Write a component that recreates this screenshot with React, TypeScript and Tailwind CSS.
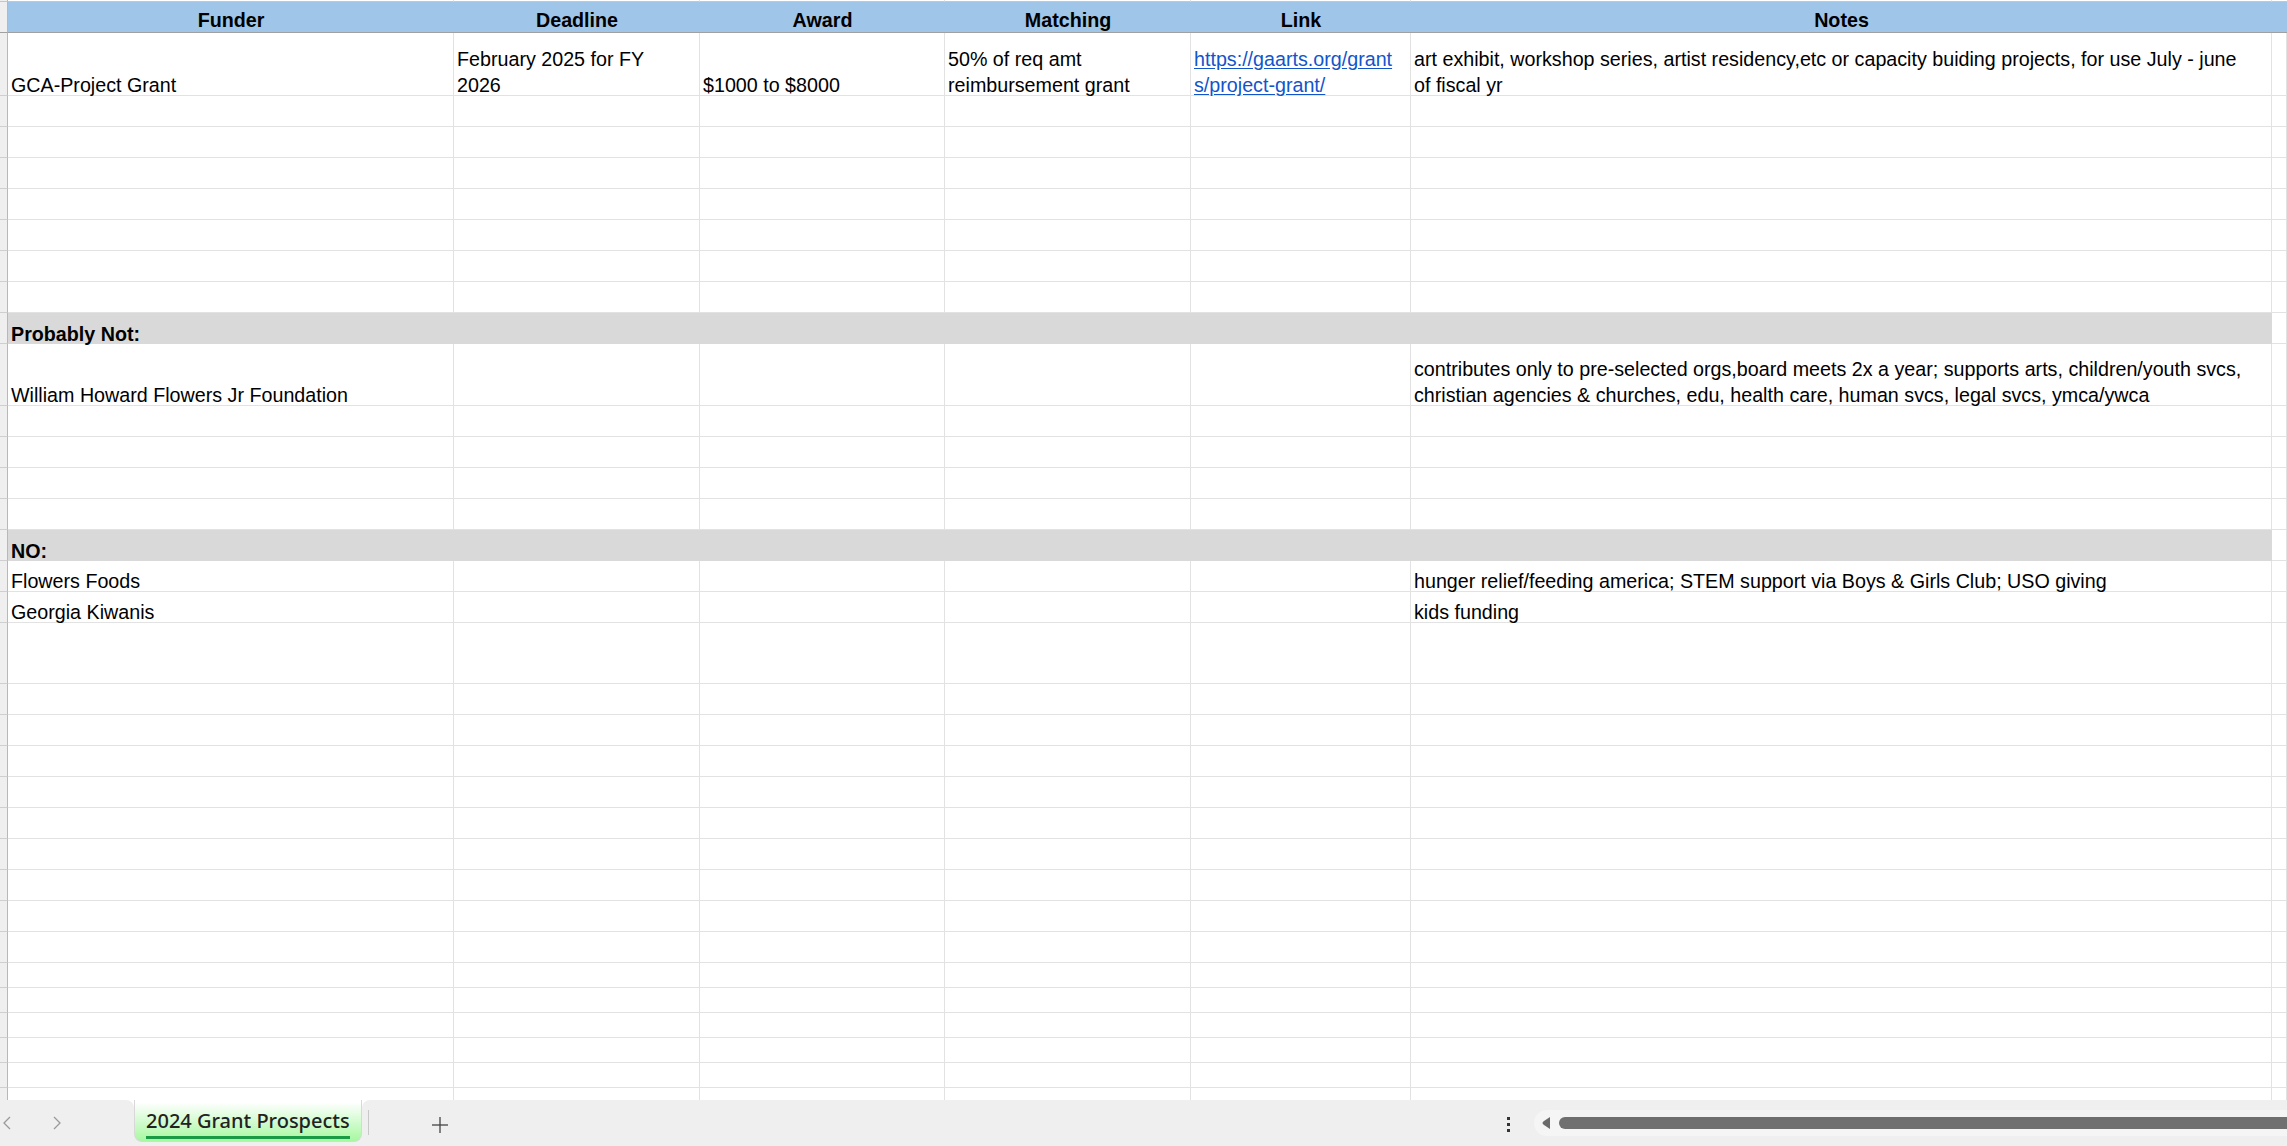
import React from "react";

const COLS = ["w-[446px]", "w-[246px]", "w-[245px]", "w-[246px]", "w-[220px]", "w-[861px]"];

type RowDef = { h: string; cells?: React.ReactNode[]; band?: string };

const link = (
  <a className="text-[#1155cc] underline underline-offset-[2px]">
    https://gaarts.org/grant
    <br />
    s/project-grant/
  </a>
);

const rows: RowDef[] = [
  {
    h: "h-[63px]",
    cells: [
      "GCA-Project Grant",
      "February 2025 for FY\n2026",
      "$1000 to $8000",
      "50% of req amt\nreimbursement grant",
      link,
      "art exhibit, workshop series, artist residency,etc or capacity buiding projects, for use July - june\nof fiscal yr",
    ],
  },
  { h: "h-[31px]" },
  { h: "h-[31px]" },
  { h: "h-[31px]" },
  { h: "h-[31px]" },
  { h: "h-[31px]" },
  { h: "h-[31px]" },
  { h: "h-[31px]" },
  { h: "h-[31px]", band: "Probably Not:" },
  {
    h: "h-[62px]",
    cells: [
      "William Howard Flowers Jr Foundation",
      "",
      "",
      "",
      "",
      "contributes only to pre-selected orgs,board meets 2x a year; supports arts, children/youth svcs,\nchristian agencies & churches, edu, health care, human svcs, legal svcs, ymca/ywca",
    ],
  },
  { h: "h-[31px]" },
  { h: "h-[31px]" },
  { h: "h-[31px]" },
  { h: "h-[31px]" },
  { h: "h-[31px]", band: "NO:" },
  {
    h: "h-[31px]",
    cells: ["Flowers Foods", "", "", "", "", "hunger relief/feeding america; STEM support via Boys & Girls Club; USO giving"],
  },
  { h: "h-[31px]", cells: ["Georgia Kiwanis", "", "", "", "", "kids funding"] },
  { h: "h-[61px]" },
  { h: "h-[31px]" },
  { h: "h-[31px]" },
  { h: "h-[31px]" },
  { h: "h-[31px]" },
  { h: "h-[31px]" },
  { h: "h-[31px]" },
  { h: "h-[31px]" },
  { h: "h-[31px]" },
  { h: "h-[31px]" },
  { h: "h-[25px]" },
  { h: "h-[25px]" },
  { h: "h-[25px]" },
  { h: "h-[25px]" },
  { h: "h-[25px]" },
  { h: "h-[25px]" },
];

function Strip({ h }: { h: string }) {
  return <div className={`${h} w-[8px] shrink-0 bg-[#efefef] border-r border-b border-r-[#b8b8b8] border-b-[#cfcfcf]`} />;
}

function Row({ r }: { r: RowDef }) {
  return (
    <div className={`${r.h} flex shrink-0`}>
      <Strip h={r.h} />
      {r.band ? (
        <>
          <div className="w-[2264px] shrink-0 bg-[#d9d9d9] flex items-end px-[3px] font-bold leading-[26px] whitespace-nowrap">
            <div className="mb-[-3px]">{r.band}</div>
          </div>
          <div className="flex-1 border-r border-b border-[#e2e2e2]" />
        </>
      ) : (
        <>
          {COLS.map((w, i) => (
            <div
              key={i}
              className={`${w} shrink-0 border-r border-b border-[#e2e2e2] flex items-end px-[3px] leading-[26px]`}
            >
              <div className="whitespace-pre mb-[-3px]">{r.cells ? r.cells[i] : null}</div>
            </div>
          ))}
          <div className="flex-1 border-r border-b border-[#e2e2e2]" />
        </>
      )}
    </div>
  );
}

const HEAD = ["Funder", "Deadline", "Award", "Matching", "Link", "Notes"];

export default function App() {
  return (
    <div className="w-[2287px] h-[1146px] overflow-hidden bg-white flex flex-col font-['Liberation_Sans',Arial,sans-serif] text-[19.7px] text-black">
      <div className="h-[1100px] overflow-hidden flex flex-col shrink-0">
        {/* sliver of row above */}
        <div className="h-[2px] flex shrink-0">
          <div className="w-[8px] shrink-0 bg-[#efefef] border-r border-b border-r-[#b8b8b8] border-b-[#c6c6c6]" />
          {COLS.map((w, i) => (
            <div key={i} className={`${w} shrink-0 border-r border-b border-r-[#e2e2e2] border-b-[#c6c6c6]`} />
          ))}
          <div className="flex-1 border-b border-[#c6c6c6]" />
        </div>
        {/* header */}
        <div className="h-[31px] flex shrink-0">
          <div className="w-[8px] shrink-0 bg-[#efefef] border-r border-b border-r-[#b8b8b8] border-b-[#a0a0a0]" />
          <div className="flex-1 flex bg-[#9fc5e8] border-b border-[#a0a0a0]">
            {HEAD.map((t, i) => (
              <div key={i} className={`${COLS[i]} shrink-0 flex items-center justify-center pt-[5px] font-bold leading-[24px]`}>
                {t}
              </div>
            ))}
          </div>
        </div>
        {rows.map((r, i) => (
          <Row key={i} r={r} />
        ))}
      </div>

      {/* bottom sheet bar */}
      <div className="h-[46px] flex bg-white shrink-0 font-['Noto_Sans',sans-serif]">
        <div className="w-[134px] shrink-0 bg-[#efefef] rounded-tr-[8px] flex items-start pt-[16px]">
          <svg width="10" height="14" viewBox="0 0 10 14" className="ml-[2px]">
            <polyline points="8,1 2,7 8,13" fill="none" stroke="#9a9a9a" strokeWidth="1.3" />
          </svg>
          <svg width="10" height="14" viewBox="0 0 10 14" className="ml-[40px]">
            <polyline points="2,1 8,7 2,13" fill="none" stroke="#9a9a9a" strokeWidth="1.3" />
          </svg>
        </div>
        <div className="w-[228px] shrink-0 flex flex-col bg-[linear-gradient(to_bottom,#ffffff_50%,#efefef_50%)]">
          <div className="h-[42px] rounded-b-[8px] border border-t-0 border-[#d8d8d8] bg-[linear-gradient(to_bottom,#ffffff_5%,#a6f8a0)] flex flex-col items-start pl-[11px] pt-[8px]">
            <span className="text-[20px] leading-[25px] font-medium text-[#222] whitespace-nowrap">2024 Grant Prospects</span>
            <div className="w-[204px] h-[3px] mt-[3px] bg-[#1b9a45]" />
          </div>
        </div>
        <div className="flex-1 bg-[#efefef] rounded-tl-[8px] flex items-start">
          <div className="ml-[6px] mt-[10px] w-px h-[25px] bg-[#c8c8c8]" />
          <svg width="18" height="18" viewBox="0 0 18 18" className="ml-[62px] mt-[16px]">
            <line x1="9" y1="1" x2="9" y2="17" stroke="#444" strokeWidth="1.3" />
            <line x1="1" y1="9" x2="17" y2="9" stroke="#444" strokeWidth="1.3" />
          </svg>
          <div className="flex-1" />
          <div className="mt-[17px] flex flex-col gap-[3px]">
            <div className="w-[3px] h-[3px] bg-[#333]" />
            <div className="w-[3px] h-[3px] bg-[#333]" />
            <div className="w-[3px] h-[3px] bg-[#333]" />
          </div>
          <div className="ml-[24px] mt-[10px] w-[753px] h-[26px] rounded-l-[13px] bg-[#f5f5f5] flex items-center pl-[7px]">
            <svg width="10" height="12" viewBox="0 0 10 12">
              <path d="M9 0 L9 12 L3 8 Q0 6 3 4 Z" fill="#6a6a6a" />
            </svg>
            <div className="ml-[8px] flex-1 h-[12px] rounded-l-full bg-[#707070]" />
          </div>
        </div>
      </div>
    </div>
  );
}
